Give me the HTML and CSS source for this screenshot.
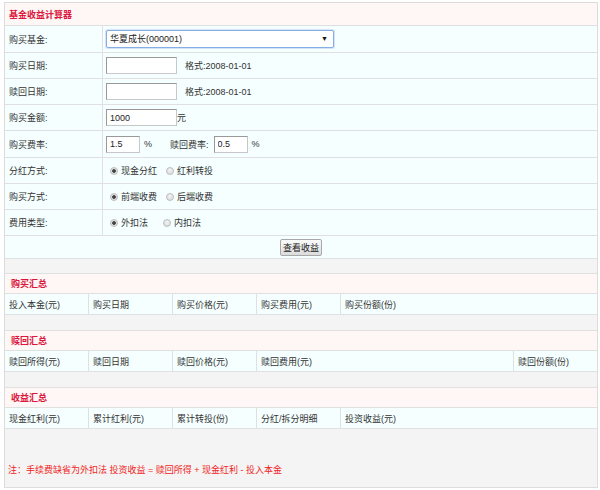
FILE: index.html
```html
<!DOCTYPE html>
<html lang="zh-CN">
<head>
<meta charset="utf-8">
<title>基金收益计算器</title>
<link rel="stylesheet" href="styles.css">
</head>
<body>
<div class="calc">
  <div class="title">基金收益计算器</div>
  <div class="row first">
    <div class="lab">购买基金:</div>
    <div class="val"><span class="select-wrap"><select class="fund"><option>华夏成长(000001)</option></select></span></div>
  </div>
  <div class="row">
    <div class="lab">购买日期:</div>
    <div class="val"><input class="txt date" type="text"><span class="hint">格式:2008-01-01</span></div>
  </div>
  <div class="row">
    <div class="lab">赎回日期:</div>
    <div class="val"><input class="txt date" type="text"><span class="hint">格式:2008-01-01</span></div>
  </div>
  <div class="row">
    <div class="lab">购买金额:</div>
    <div class="val"><input class="txt date" type="text" value="1000"><span>元</span></div>
  </div>
  <div class="row tall">
    <div class="lab">购买费率:</div>
    <div class="val"><input class="txt rate" type="text" value="1.5"><span class="pct">%</span><span class="lab2">赎回费率:</span><input class="txt rate" type="text" value="0.5"><span class="pct">%</span></div>
  </div>
  <div class="row">
    <div class="lab">分红方式:</div>
    <div class="val"><label class="opt w1"><input type="radio" name="fh" checked>现金分红</label><label class="opt"><input type="radio" name="fh">红利转投</label></div>
  </div>
  <div class="row">
    <div class="lab">购买方式:</div>
    <div class="val"><label class="opt w1"><input type="radio" name="gm" checked>前端收费</label><label class="opt"><input type="radio" name="gm">后端收费</label></div>
  </div>
  <div class="row">
    <div class="lab">费用类型:</div>
    <div class="val"><label class="opt w2"><input type="radio" name="fy" checked>外扣法</label><label class="opt"><input type="radio" name="fy">内扣法</label></div>
  </div>
  <div class="row btn-row">
    <button class="btn" type="button">查看收益</button>
  </div>

  <div class="sum">
    <div class="sum-head">购买汇总</div>
    <div class="sum-row cols-a">
      <div class="cell">投入本金(元)</div>
      <div class="cell">购买日期</div>
      <div class="cell">购买价格(元)</div>
      <div class="cell">购买费用(元)</div>
      <div class="cell">购买份额(份)</div>
    </div>
  </div>

  <div class="sum">
    <div class="sum-head">赎回汇总</div>
    <div class="sum-row cols-b">
      <div class="cell">赎回所得(元)</div>
      <div class="cell">赎回日期</div>
      <div class="cell">赎回价格(元)</div>
      <div class="cell">赎回费用(元)</div>
      <div class="cell">赎回份额(份)</div>
    </div>
  </div>

  <div class="sum">
    <div class="sum-head">收益汇总</div>
    <div class="sum-row cols-a">
      <div class="cell">现金红利(元)</div>
      <div class="cell">累计红利(元)</div>
      <div class="cell">累计转投(份)</div>
      <div class="cell">分红/拆分明细</div>
      <div class="cell">投资收益(元)</div>
    </div>
  </div>

  <div class="note">注：手续费缺省为外扣法 投资收益 = 赎回所得 + 现金红利 - 投入本金</div>
</div>
</body>
</html>
```

FILE: styles.css
```css
* { box-sizing: border-box; }

body {
  margin: 0;
  padding: 2px 2px 0 4px;
  background: #fff;
  font: 9px "Liberation Sans", "Noto Sans CJK SC", sans-serif;
  color: #333;
}

.calc {
  width: 594px;
  height: 486px;
  border: 1px solid #dcdcdc;
  background: #f4f4f4;
  display: flex;
  flex-direction: column;
}

.title {
  height: 23px;
  background: #fff6f6;
  border-bottom: 1px solid #e0e0e0;
  color: #dc163c;
  font-weight: bold;
  padding-left: 4px;
  display: flex;
  align-items: center;
}

.row {
  height: 26px;
  display: grid;
  grid-template-columns: 98px 1fr;
  background: #f5ffff;
  border-bottom: 1px solid #e0e0e0;
}
.row.first { height: 27px; }
.row.tall { height: 27px; }

.lab {
  border-right: 1px solid #e0e0e0;
  padding-left: 4px;
  display: flex;
  align-items: center;
}

.val {
  padding-left: 3px;
  display: flex;
  align-items: center;
}

.select-wrap {
  position: relative;
  display: inline-block;
}
.select-wrap::after {
  content: "▼";
  position: absolute;
  right: 6px;
  top: 5px;
  font-size: 7px;
  color: #111;
}
.fund {
  appearance: none;
  -webkit-appearance: none;
  width: 228px;
  height: 18px;
  border: 1px solid #86aee6;
  border-radius: 2px;
  box-shadow: 0 0 0 1px #d4e3f8;
  background: #fff;
  font: inherit;
  color: #222;
  padding: 0 3px;
  outline: none;
}

.txt {
  height: 17px;
  border: 1px solid #aaa;
  border-color: #999 #c8c8c8 #c8c8c8 #999;
  background: #fff;
  font: inherit;
  color: #222;
  padding: 0 3px;
  outline: none;
}
.txt.date { width: 71px; }
.txt.rate { width: 34px; }

.hint { margin-left: 8px; }
.pct { margin-left: 4px; }
.lab2 { margin-left: 18px; margin-right: 5px; }

.opt {
  display: inline-flex;
  align-items: center;
}
.opt.w1 { width: 56px; }
.opt.w2 { width: 53px; }

.opt input {
  appearance: none;
  -webkit-appearance: none;
  width: 8px;
  height: 8px;
  margin: 0 3px 0 4px;
  border: 1px solid #bdbdbd;
  border-radius: 50%;
  background: radial-gradient(circle at 50% 35%, #f4f4f4 0, #d6d6d6 100%);
}
.opt input:checked {
  background: radial-gradient(circle, #444 0, #444 1.5px, #e4e4e4 2.2px, #d2d2d2 100%);
}

.btn-row {
  height: 23px;
  display: flex;
  align-items: center;
  justify-content: center;
}

.btn {
  font: inherit;
  color: #222;
  height: 17px;
  width: 42px;
  padding: 0;
  border: 1px solid #a8a8a8;
  border-radius: 2px;
  background: linear-gradient(#fafafa, #dcdcdc);
}

.sum {
  margin-top: 14px;
  border-top: 1px solid #e0e0e0;
}
.sum + .sum { margin-top: 15px; }

.sum-head {
  height: 20px;
  background: #fff6f6;
  border-bottom: 1px solid #e0e0e0;
  color: #dc163c;
  font-weight: bold;
  padding-left: 6px;
  display: flex;
  align-items: center;
}

.sum-row {
  height: 21px;
  display: grid;
  background: #f5ffff;
  border-bottom: 1px solid #e0e0e0;
}
.cols-a { grid-template-columns: 84px 84px 84px 84px 1fr; }
.cols-b { grid-template-columns: 84px 84px 84px 257px 1fr; }

.cell {
  padding-left: 4px;
  display: flex;
  align-items: center;
  border-right: 1px solid #e0e0e0;
}
.cell:last-child { border-right: none; }

.note {
  margin-top: 34px;
  padding-left: 3px;
  color: #f01e1e;
}
```
